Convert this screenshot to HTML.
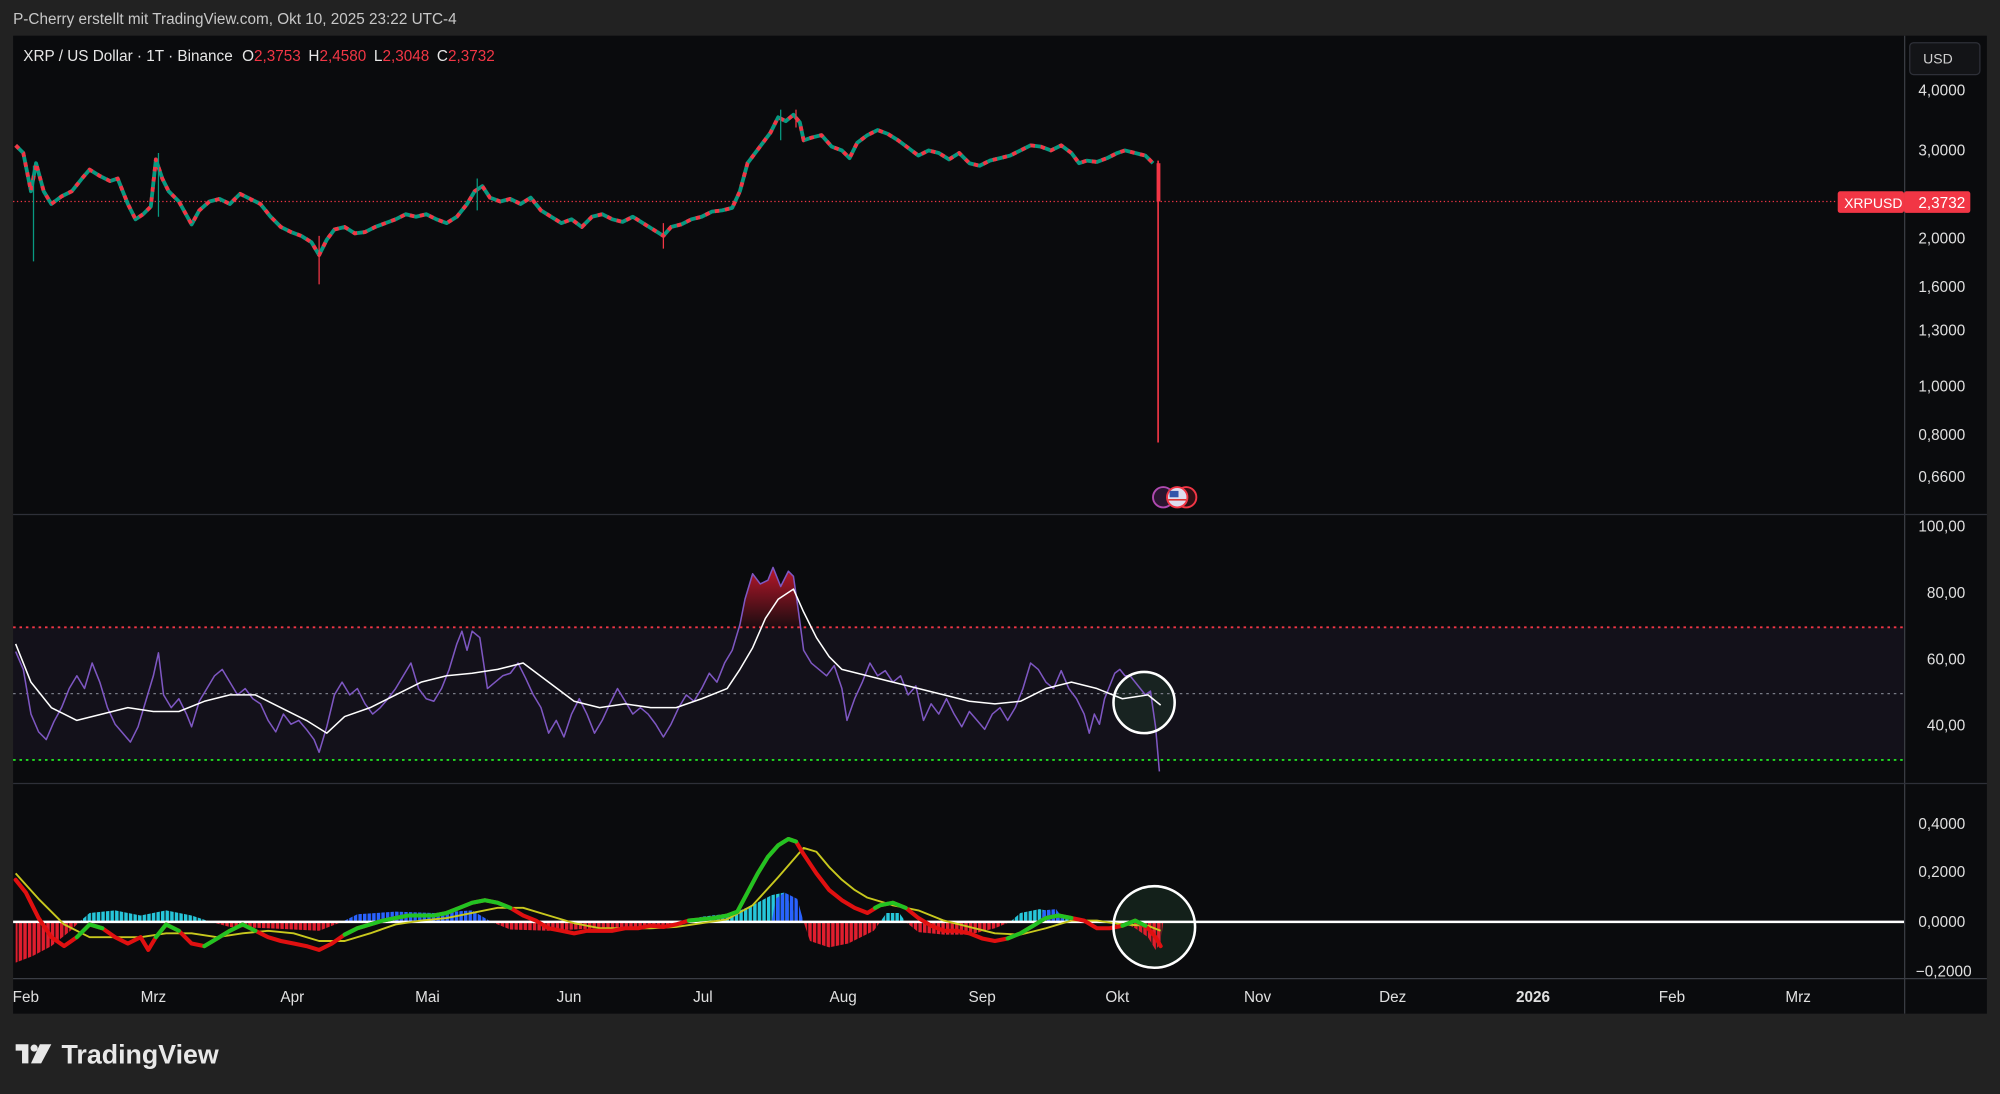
<!DOCTYPE html>
<html><head><meta charset="utf-8"><style>
html,body{margin:0;padding:0;background:#222222;width:2000px;height:1094px;overflow:hidden}
svg{display:block}
text{font-family:"Liberation Sans",sans-serif}
</style></head><body>
<svg width="2000" height="1094" viewBox="0 0 1568 858" xmlns="http://www.w3.org/2000/svg">
<defs>
<linearGradient id="rg" x1="0" y1="0" x2="0" y2="1"><stop offset="0" stop-color="#c2182c" stop-opacity="0.95"/><stop offset="1" stop-color="#c2182c" stop-opacity="0.1"/></linearGradient>
<pattern id="pb" patternUnits="userSpaceOnUse" width="3.6" height="10"><rect x="0" y="0" width="2.7" height="10" fill="#2962ff"/></pattern>
<pattern id="pc" patternUnits="userSpaceOnUse" width="3.6" height="10"><rect x="0" y="0" width="2.7" height="10" fill="#26c6da"/></pattern>
<pattern id="pr" patternUnits="userSpaceOnUse" width="3.6" height="10"><rect x="0" y="0" width="2.7" height="10" fill="#e01e2e"/></pattern>
</defs>
<rect x="0" y="0" width="1568" height="858" fill="#222"/>
<text x="10" y="19" fill="#c8c8c8" font-size="12">P-Cherry erstellt mit TradingView.com, Okt 10, 2025 23:22 UTC-4</text>
<rect x="10" y="28" width="1548" height="767" fill="#0a0b0d"/>
<line x1="1493.5" y1="28" x2="1493.5" y2="795" stroke="#3a3d44"/>
<line x1="10" y1="403.5" x2="1558" y2="403.5" stroke="#2e3038"/>
<line x1="10" y1="614.5" x2="1558" y2="614.5" stroke="#2e3038"/>
<line x1="10" y1="767.5" x2="1558" y2="767.5" stroke="#3a3d44"/>
<rect x="10" y="492" width="1483" height="104" fill="#7e57c2" fill-opacity="0.08"/>
<circle cx="897" cy="551" r="24" fill="#1f3a2a" fill-opacity="0.45"/>
<circle cx="905" cy="727" r="32" fill="#1f3a2a" fill-opacity="0.45"/>
<line x1="10" y1="492" x2="1493" y2="492" stroke="#f23645" stroke-width="1.5" stroke-dasharray="2,3"/>
<line x1="10" y1="544" x2="1493" y2="544" stroke="#787b86" stroke-width="1" stroke-dasharray="2,3"/>
<line x1="10" y1="596" x2="1493" y2="596" stroke="#22dd22" stroke-width="1.5" stroke-dasharray="2,3"/>
<line x1="10" y1="158" x2="1441" y2="158" stroke="#f23645" stroke-width="1" stroke-dasharray="1,2"/>

<!-- price -->
<g fill="none" stroke-linejoin="round">
<polyline id="pl" stroke="#089981" stroke-width="3" points="12,114 18,120 24,150 28,128 34,150 40,160 48,154 56,150 64,140 70,133 78,138 86,142 92,140 100,160 106,172 112,168 118,162 122,125 127,140 132,150 140,158 150,176 156,165 164,158 172,156 180,160 188,152 196,156 204,160 212,170 220,178 228,182 236,185 244,190 250,200 256,188 262,180 270,178 278,183 286,182 294,178 302,175 310,172 318,168 326,170 334,168 342,172 350,175 358,170 366,160 372,150 378,146 384,155 392,158 400,156 408,160 416,155 424,165 432,170 440,175 448,172 456,178 464,170 472,168 480,172 488,174 496,170 504,175 512,180 520,185 526,178 534,176 542,172 550,170 558,166 566,165 574,163 580,150 586,128 592,120 598,112 604,104 610,92 616,95 622,90 627,96 630,110 636,108 644,106 652,115 660,118 666,124 672,112 680,106 688,102 696,105 704,110 712,116 720,122 728,118 736,120 744,125 752,120 760,128 768,130 776,126 784,124 792,122 800,118 808,114 816,115 824,118 832,114 840,120 846,128 852,126 860,127 868,124 876,120 882,118 890,120 898,122 904,128"/>
<polyline stroke="#f23645" stroke-width="3" stroke-dasharray="3.5,4.5" points="12,114 18,120 24,150 28,128 34,150 40,160 48,154 56,150 64,140 70,133 78,138 86,142 92,140 100,160 106,172 112,168 118,162 122,125 127,140 132,150 140,158 150,176 156,165 164,158 172,156 180,160 188,152 196,156 204,160 212,170 220,178 228,182 236,185 244,190 250,200 256,188 262,180 270,178 278,183 286,182 294,178 302,175 310,172 318,168 326,170 334,168 342,172 350,175 358,170 366,160 372,150 378,146 384,155 392,158 400,156 408,160 416,155 424,165 432,170 440,175 448,172 456,178 464,170 472,168 480,172 488,174 496,170 504,175 512,180 520,185 526,178 534,176 542,172 550,170 558,166 566,165 574,163 580,150 586,128 592,120 598,112 604,104 610,92 616,95 622,90 627,96 630,110 636,108 644,106 652,115 660,118 666,124 672,112 680,106 688,102 696,105 704,110 712,116 720,122 728,118 736,120 744,125 752,120 760,128 768,130 776,126 784,124 792,122 800,118 808,114 816,115 824,118 832,114 840,120 846,128 852,126 860,127 868,124 876,120 882,118 890,120 898,122 904,128"/>
</g>
<g stroke-width="1">
<line x1="26" y1="130" x2="26" y2="205" stroke="#089981"/>
<line x1="250" y1="185" x2="250" y2="223" stroke="#f23645"/>
<line x1="124" y1="120" x2="124" y2="170" stroke="#089981"/>
<line x1="374" y1="140" x2="374" y2="165" stroke="#089981"/>
<line x1="520" y1="175" x2="520" y2="195" stroke="#f23645"/>
<line x1="612" y1="86" x2="612" y2="110" stroke="#089981"/>
<line x1="624" y1="86" x2="624" y2="100" stroke="#f23645"/>
<line x1="908" y1="126" x2="908" y2="347" stroke="#f23645" stroke-width="1.3"/>
</g>
<rect x="906.8" y="128" width="3" height="30" fill="#f23645"/>

<!-- RSI -->
<polygon fill="url(#rg)" points="580,492 584,470 590,450 596,458 602,455 606,445 612,460 618,448 622,452 626,480 628,492"/>
<polyline fill="none" stroke="#7e57c2" stroke-width="1.2" stroke-linejoin="round" points="12,511 18,525 24,560 30,574 36,580 42,566 48,555 54,540 60,530 66,540 72,520 78,535 84,555 90,568 96,575 102,582 108,570 114,550 120,530 124,512 128,545 134,555 140,548 146,560 150,570 156,550 162,540 168,530 174,525 180,535 186,545 192,540 198,548 204,552 210,565 216,574 222,560 228,568 234,565 240,572 246,580 250,590 256,570 262,545 268,535 274,545 280,540 286,552 292,560 298,555 304,548 310,540 316,530 322,520 328,540 334,548 340,550 346,540 352,525 358,505 362,495 366,510 370,495 376,500 382,540 388,535 394,530 400,528 406,520 412,532 418,545 424,555 430,575 436,565 442,578 448,560 454,548 460,560 466,575 472,565 478,552 484,540 490,550 496,560 502,555 508,560 514,568 520,578 526,568 532,555 538,545 544,550 550,540 556,528 562,535 568,520 574,510 580,490 584,470 590,450 596,458 602,455 606,445 612,460 618,448 622,452 626,480 630,510 636,520 642,525 648,530 654,522 660,540 664,565 670,548 676,535 682,520 688,530 694,526 700,535 706,530 712,545 718,538 724,565 730,552 736,560 742,548 748,560 754,570 760,558 766,565 772,572 778,560 784,555 790,565 796,555 802,540 808,520 814,525 820,535 826,540 832,526 838,540 844,548 850,560 854,575 858,560 862,568 866,548 870,538 874,528 878,525 882,530 886,530 890,535 894,540 898,545 902,542 906,570 909,605"/>
<polyline fill="none" stroke="#ffffff" stroke-width="1.2" stroke-linejoin="round" points="12,505 24,535 40,555 60,565 80,560 100,555 120,558 140,558 160,550 180,545 200,545 220,555 240,565 256,575 270,562 290,555 310,545 330,535 350,530 370,528 390,525 410,520 430,535 450,550 470,555 490,552 510,555 530,555 550,548 570,540 580,525 590,508 600,485 610,470 622,462 630,480 640,500 650,515 660,525 680,530 700,535 720,540 740,545 760,550 780,552 800,550 820,540 840,535 860,540 880,548 900,545 910,553"/>

<!-- MACD histogram -->
<polygon fill="url(#pr)" points="12,723 12,755 25,750 40,742 55,730 62,723"/>
<polygon fill="url(#pc)" points="62,723 70,716 90,714 110,718 130,714 150,718 165,723"/>
<polygon fill="url(#pr)" points="165,723 180,727 210,728 250,730 268,723"/>
<polygon fill="url(#pb)" points="268,723 280,717 310,715 340,716 370,714 385,723"/>
<polygon fill="url(#pr)" points="385,723 400,729 430,730 470,728 510,727 535,723"/>
<polygon fill="url(#pc)" points="535,723 550,719 575,716 590,710 605,702 615,700 620,710 626,723"/>
<polygon fill="url(#pb)" points="605,723 608,705 615,700 625,705 630,723"/>
<polygon fill="url(#pr)" points="630,723 635,738 650,743 665,740 685,730 690,723"/>
<polygon fill="url(#pc)" points="690,723 695,716 705,716 710,723"/>
<polygon fill="url(#pr)" points="710,723 720,731 740,733 760,733 780,728 792,723"/>
<polygon fill="url(#pc)" points="792,723 800,716 815,713 830,716 845,723"/>
<polygon fill="url(#pb)" points="815,723 818,714 828,713 835,723"/>
<polygon fill="url(#pr)" points="880,723 890,728 900,735 906,745 910,740 912,723"/>
<line x1="10" y1="723" x2="1493" y2="723" stroke="#ffffff" stroke-width="2"/>
<!-- MACD lines -->
<polyline fill="none" stroke="#c8c81e" stroke-width="1.5" stroke-linejoin="round" points="12,685 30,705 50,725 70,735 90,735 110,735 130,732 150,732 170,735 190,732 210,730 230,732 250,738 270,738 290,732 310,725 330,722 350,720 370,716 390,712 410,712 430,718 450,724 470,728 490,728 510,728 530,727 550,724 570,721 590,710 610,688 630,665 640,668 650,680 660,690 670,698 680,704 700,710 720,714 740,722 760,727 780,732 800,733 820,728 840,722 860,722 880,725 900,726 910,730"/>
<polyline fill="none" stroke="#e01010" stroke-width="3.2" stroke-linejoin="round" stroke-linecap="round" points="12,690 20,700 30,720 40,735 50,742 60,735 70,725 80,728 90,735 100,740 110,735 116,745 122,735 130,725 140,730 150,740 160,742 170,736 180,730 190,725 200,730 210,735 220,738 230,740 240,742 250,745 260,740 270,733 280,728 290,725 300,722 310,720 320,718 330,718 340,718 350,716 360,712 370,708 380,706 390,708 400,712 410,718 420,722 430,728 440,730 450,732 460,730 470,730 480,730 490,728 500,728 510,726 520,727 530,725 540,722 550,721 560,720 570,718 578,715 586,700 594,685 602,672 610,663 618,658 624,660 630,670 640,685 650,698 660,706 670,712 680,716 690,710 700,708 710,712 720,720 730,726 740,730 750,730 760,732 770,736 780,738 790,736 800,732 810,726 820,720 830,718 840,720 850,722 860,728 870,728 880,726 890,722 900,728 906,735 910,742"/>
<g fill="none" stroke="#22c322" stroke-width="3.2" stroke-linejoin="round" stroke-linecap="round">
<polyline points="60,735 70,725 80,728"/>
<polyline points="122,735 130,725 140,730"/>
<polyline points="160,742 170,736 180,730 190,725 200,730"/>
<polyline points="270,733 280,728 290,725 300,722 310,720 320,718 330,718 340,718 350,716 360,712 370,708 380,706 390,708 400,712"/>
<polyline points="540,722 550,721 560,720 570,718 578,715 586,700 594,685 602,672 610,663 618,658 624,660"/>
<polyline points="686,712 690,710 700,708 710,712"/>
<polyline points="790,736 800,732 810,726 820,720 830,718 840,720"/>
<polyline points="880,726 890,722 898,726"/>
</g>

<circle cx="897" cy="551" r="24" fill="none" stroke="#fff" stroke-width="2"/>
<circle cx="905" cy="727" r="32" fill="none" stroke="#fff" stroke-width="2"/>
<circle cx="912" cy="390" r="8" fill="#2a1530" stroke="#b04ab0" stroke-width="1.5"/>
<circle cx="930" cy="390" r="8" fill="#301015" stroke="#f23645" stroke-width="1.5"/>
<circle cx="923" cy="390" r="8" fill="#dde" stroke="#f23645" stroke-width="1.5"/>
<rect x="917" y="385" width="7" height="5" fill="#3355aa"/>
<line x1="916" y1="392" x2="930" y2="392" stroke="#d33" stroke-width="1.2"/>

<text x="18" y="48" fill="#e6e6e6" font-size="12">XRP / US Dollar · 1T · Binance <tspan dx="4">O</tspan><tspan fill="#f23645">2,3753</tspan><tspan dx="6">H</tspan><tspan fill="#f23645">2,4580</tspan><tspan dx="6">L</tspan><tspan fill="#f23645">2,3048</tspan><tspan dx="6">C</tspan><tspan fill="#f23645">2,3732</tspan></text>
<rect x="1497.5" y="33.5" width="55" height="25" rx="3" fill="#131417" stroke="#2e3038"/>
<text x="1508" y="50" fill="#d0d0d0" font-size="11">USD</text>
<g fill="#e0e0e0" font-size="12" text-anchor="end">
<text x="1541" y="75">4,0000</text><text x="1541" y="122">3,0000</text><text x="1541" y="191">2,0000</text><text x="1541" y="229">1,6000</text><text x="1541" y="263">1,3000</text><text x="1541" y="307">1,0000</text><text x="1541" y="345">0,8000</text><text x="1541" y="378">0,6600</text>
<text x="1541" y="417">100,00</text><text x="1541" y="469">80,00</text><text x="1541" y="521">60,00</text><text x="1541" y="573">40,00</text>
<text x="1541" y="650">0,4000</text><text x="1541" y="688">0,2000</text><text x="1541" y="727">0,0000</text><text x="1546" y="766">−0,2000</text>
</g>
<rect x="1441" y="150" width="52" height="17" rx="2" fill="#f23645"/>
<rect x="1493" y="150" width="52" height="17" rx="2" fill="#f23645"/>
<text x="1446" y="163" fill="#fff" font-size="11">XRPUSD</text>
<text x="1541" y="163" fill="#fff" font-size="12" text-anchor="end">2,3732</text>
<g fill="#e0e0e0" font-size="12" text-anchor="middle">
<text x="20" y="786">Feb</text><text x="120" y="786">Mrz</text><text x="229" y="786">Apr</text><text x="335" y="786">Mai</text><text x="446" y="786">Jun</text><text x="551" y="786">Jul</text><text x="661" y="786">Aug</text><text x="770" y="786">Sep</text><text x="876" y="786">Okt</text><text x="986" y="786">Nov</text><text x="1092" y="786">Dez</text><text x="1202" y="786" font-weight="bold">2026</text><text x="1311" y="786">Feb</text><text x="1410" y="786">Mrz</text>
</g>
<g fill="#e8e8e8">
<path d="M12 819 h10 v15 h-5 v-10 h-5z"/><circle cx="26.5" cy="822" r="2.8"/><path d="M31 819 h9 l-8 15 h-8z"/>
</g>
<text x="48" y="834" fill="#e8e8e8" font-size="21" font-weight="bold">TradingView</text>
</svg>
</body></html>
